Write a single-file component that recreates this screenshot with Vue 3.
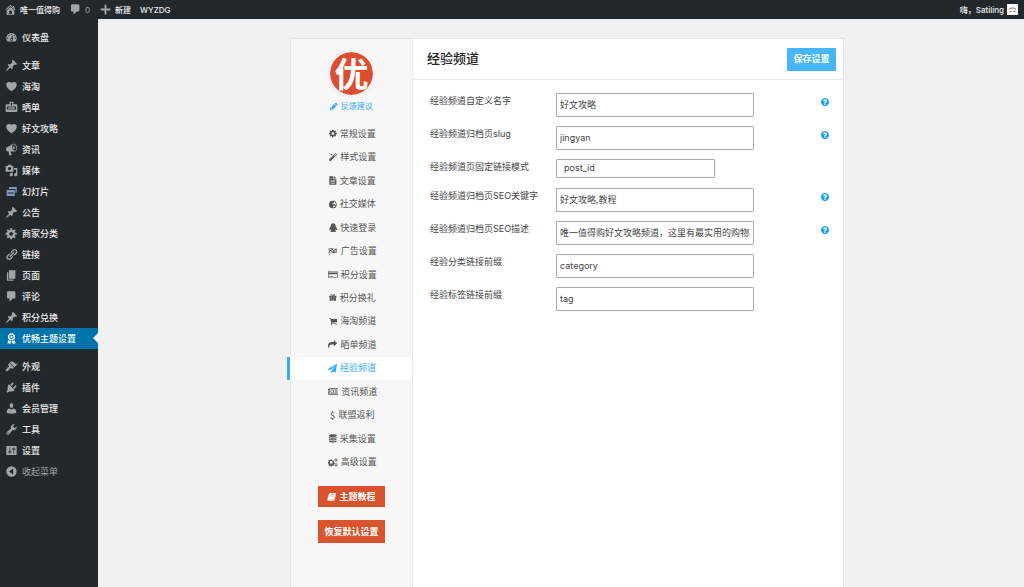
<script setup>
import { ref } from 'vue'

const dash = {
  home: 'M16 8.5l1.53 1.53-1.06 1.06L10 4.6l-6.47 6.49-1.06-1.06L10 2.5l4 4v-2h2v4zm-6-2.46l6 5.99V18H4v-5.97zM12 17v-5H8v5h4z',
  comment: 'M5 2h9c1.1 0 2 .9 2 2v7c0 1.1-.9 2-2 2h-2l-5 5v-5H5c-1.1 0-2-.9-2-2V4c0-1.1.9-2 2-2z',
  plus: 'M17.5 8.6v2.8h-6.1v6.1H8.6v-6.1H2.5V8.6h6.1V2.5h2.8v6.1h6.1z',
  dashboard: 'M3.76 16h12.48c1.1-1.37 1.76-3.11 1.76-5 0-4.42-3.58-8-8-8s-8 3.58-8 8c0 1.89.66 3.63 1.76 5zM10 4c.55 0 1 .45 1 1s-.45 1-1 1-1-.45-1-1 .45-1 1-1zM6 6c.55 0 1 .45 1 1s-.45 1-1 1-1-.45-1-1 .45-1 1-1zm8 0c.55 0 1 .45 1 1s-.45 1-1 1-1-.45-1-1 .45-1 1-1zm-5.37 5.55L12 7v6c0 1.1-.9 2-2 2s-2-.9-2-2c0-.57.24-1.08.63-1.45zM4 10c.55 0 1 .45 1 1s-.45 1-1 1-1-.45-1-1 .45-1 1-1zm12 0c.55 0 1 .45 1 1s-.45 1-1 1-1-.45-1-1 .45-1 1-1zm-5 3c0-.55-.45-1-1-1s-1 .45-1 1 .45 1 1 1 1-.45 1-1z',
  pin: 'M10.44 3.02l1.82-1.82 6.36 6.35-1.83 1.82c-1.05-.68-2.48-.57-3.41.36l-.75.75c-.92.93-1.04 2.35-.35 3.41l-1.83 1.82-2.41-2.41-2.8 2.79c-.42.42-3.38 2.71-3.8 2.29s1.86-3.39 2.28-3.81l2.79-2.79L4.1 9.36l1.83-1.82c1.05.69 2.48.57 3.4-.36l.75-.75c.93-.92 1.05-2.35.36-3.41z',
  heart: 'M10 17.12c3.33-1.4 5.74-3.79 7.04-6.21 1.28-2.41 1.46-4.81.32-6.25-1.03-1.29-2.37-1.78-3.73-1.74s-2.68.63-3.63 1.46c-.95-.83-2.27-1.42-3.63-1.46s-2.7.45-3.73 1.74c-1.14 1.44-.96 3.84.34 6.25 1.28 2.42 3.69 4.81 7.02 6.21z',
  badge: 'M7 1h6v4h4.5Q19 5 19 6.5v9q0 1.5-1.5 1.5h-15Q1 17 1 15.5v-9Q1 5 2.500 5H7zM9 2.500v4h2v-4zM3 8.500v4.500h14V8.500zM5 9.500h10v2.500H5z',
  megaphone: 'M18.15 5.94c.46 1.62.38 3.22-.02 4.48-.42 1.28-1.26 2.18-2.3 2.48-.16.06-.26.06-.4.06-.06.02-.12.02-.18.02-.06.02-.14.02-.22.02h-6.8l2.22 5.5c.02.14-.06.26-.14.34-.08.1-.24.16-.34.16H6.95c-.1 0-.26-.06-.34-.16-.08-.08-.16-.2-.14-.34l-1-5.5H4.25l-.02-.02c-.5.06-1.08-.18-1.54-.62s-.88-1.08-1.06-1.88c-.24-.8-.2-1.56-.02-2.2.18-.62.58-1.08 1.06-1.3l.02-.02 9-5.4c.1-.06.18-.1.24-.16.06-.04.14-.08.24-.12.16-.08.28-.12.5-.18 1.04-.3 2.24.1 3.22.98s1.84 2.24 2.26 3.86zm-2.58 5.98h-.02c.4-.1.74-.34 1.04-.7.58-.7.86-1.76.86-3.04 0-.64-.1-1.3-.28-1.98-.34-1.36-1.02-2.5-1.78-3.24s-1.68-1.1-2.46-.88c-.82.22-1.4.96-1.7 2-.32 1.04-.28 2.36.06 3.72.38 1.36 1 2.5 1.8 3.24.78.74 1.62 1.1 2.48.88zm-2.54-7.08c.22-.04.42-.02.62.04.38.16.76.48 1.02 1s.42 1.2.42 1.78c0 .3-.04.56-.12.8-.18.48-.44.84-.86.94-.34.1-.8-.06-1.14-.4s-.64-.86-.78-1.5c-.18-.62-.12-1.24.02-1.72s.48-.84.82-.94z',
  media: 'M13 11V4c0-.55-.45-1-1-1h-1.67L9 1H5L3.67 3H2c-.55 0-1 .45-1 1v7c0 .55.45 1 1 1h10c.55 0 1-.45 1-1zM7 4.5c1.38 0 2.5 1.12 2.5 2.5S8.38 9.5 7 9.5 4.5 8.38 4.5 7 5.62 4.5 7 4.5zM14 6h5v10.5c0 1.38-1.12 2.5-2.5 2.5S14 17.88 14 16.5s1.12-2.5 2.5-2.5c.17 0 .34.02.5.05V9h-3V6zm-4 8.05V13h2v3.5c0 1.38-1.12 2.5-2.5 2.5S7 17.88 7 16.5 8.12 14 9.5 14c.17 0 .34.02.5.05z',
  slides: 'M6 3h12v9h-2V6H6zM2.5 7.5H15V17H2.5zM4.5 11.5V13H13v-1.5z',
  gear: 'M18 12h-2.18c-.17.7-.44 1.35-.81 1.93l1.54 1.54-2.1 2.1-1.54-1.54c-.58.36-1.23.63-1.91.79V19H8v-2.18c-.68-.16-1.33-.43-1.91-.79l-1.54 1.54-2.12-2.12 1.54-1.54c-.36-.58-.63-1.23-.79-1.91H1V9.03h2.17c.16-.7.44-1.35.8-1.94L2.43 5.55l2.1-2.1 1.54 1.54c.58-.37 1.24-.64 1.93-.81V2h3v2.18c.68.16 1.33.43 1.91.79l1.54-1.54 2.12 2.12-1.54 1.54c.36.59.64 1.24.8 1.94H18V12zm-8.5 1.5c1.66 0 3-1.34 3-3s-1.34-3-3-3-3 1.34-3 3 1.34 3 3 3z',
  link: 'M17.74 2.76c1.68 1.69 1.68 4.41 0 6.1l-1.53 1.52c-1.12 1.12-2.7 1.47-4.14 1.09l2.62-2.61.76-.77.76-.76c.84-.84.84-2.2 0-3.04-.84-.85-2.2-.85-3.04 0l-.77.76-3.38 3.38c-.37-1.44-.02-3.02 1.1-4.14l1.52-1.53c1.69-1.68 4.42-1.68 6.1 0zM8.59 13.43l5.34-5.34c.42-.42.42-1.1 0-1.52-.44-.43-1.13-.39-1.53 0l-5.33 5.34c-.42.42-.42 1.1 0 1.52.44.43 1.13.39 1.52 0zm-.76 2.29l4.14-4.15c.38 1.44.03 3.02-1.09 4.14l-1.52 1.53c-1.69 1.68-4.41 1.68-6.1 0-1.68-1.68-1.68-4.42 0-6.1l1.53-1.52c1.12-1.12 2.7-1.47 4.14-1.1l-4.14 4.15c-.85.84-.85 2.2 0 3.05.84.84 2.2.84 3.04 0z',
  page: 'M6 15V2h10v13H6zm-1 1h8v2H3V5h2v11z',
  award: 'M4.46 5.16L5 7.46l-.54 2.29 2.01 1.24L7.7 13l2.3-.54 2.3.54 1.23-2.01 2.01-1.24L15 7.46l.54-2.3-2-1.24-1.24-2.01-2.3.55-2.29-.54-1.25 2zM10 4.3a3.2 3.2 0 1 0 0 6.4 3.2 3.2 0 1 0 0-6.4zM10 5.8a1.7 1.7 0 1 1 0 3.4 1.7 1.7 0 1 1 0-3.4zM5.600 11.900L3.500 17.500l2.800-.3L8 19l1.800-5.300-2.500.5zM14.400 11.900l2.100 5.600-2.800-.3L12 19l-1.800-5.300 2.500.5z',
  brush: 'M14.48 11.06L7.41 3.99l1.5-1.5c.5-.56 2.3-.47 3.51.32 1.21.8 1.43 1.28 2.91 2.1 1.18.64 2.45 1.26 4.45.85zm-.71.71L6.7 4.7 4.93 6.47c-.39.39-.39 1.02 0 1.41l1.06 1.06c.39.39.39 1.03 0 1.42-.6.6-1.43 1.11-2.21 1.69-.35.26-.7.53-1.01.84C1.43 14.23.4 16.08 1.4 17.07c.99 1 2.84-.03 4.18-1.36.31-.31.58-.66.85-1.02.57-.78 1.08-1.61 1.69-2.21.39-.39 1.02-.39 1.41 0l1.06 1.06c.39.39 1.02.39 1.41 0z',
  plug: 'M13.11 4.36L9.87 7.6 8 5.73l3.24-3.24c.35-.34 1.05-.2 1.56.32.52.51.66 1.21.31 1.55zm-8 1.77l.91-1.12 9.01 9.01-1.19.84c-.71.71-2.63 1.16-3.82 1.16H6.14L4.9 17.26c-.59.59-1.54.59-2.12 0-.59-.58-.59-1.53 0-2.12l1.24-1.24v-3.88c0-1.13.4-3.19 1.09-3.89zm7.26 3.97l3.24-3.24c.34-.35 1.04-.21 1.55.31.52.51.66 1.21.31 1.55l-3.24 3.25z',
  user: 'M10 9.25c-2.27 0-2.73-3.44-2.73-3.44C7 4.02 7.82 2 9.97 2c2.16 0 2.98 2.02 2.71 3.81 0 0-.41 3.44-2.68 3.44zm0 2.57L12.72 10c2.39 0 4.52 2.33 4.52 4.53v2.49s-3.65 1.13-7.24 1.13c-3.65 0-7.24-1.13-7.24-1.13v-2.49c0-2.25 1.94-4.48 4.47-4.48z',
  wrench: 'M16.68 9.77c-1.34 1.34-3.3 1.67-4.95.99l-5.41 6.52c-.99.99-2.59.99-3.58 0s-.99-2.59 0-3.57l6.52-5.42c-.68-1.65-.35-3.61.99-4.95 1.28-1.28 3.12-1.62 4.72-1.06l-2.89 2.89 2.82 2.82 2.86-2.87c.53 1.58.18 3.39-1.08 4.65zM3.81 16.21c.4.39 1.04.39 1.43 0 .4-.4.4-1.04 0-1.43-.39-.4-1.03-.4-1.43 0-.39.39-.39 1.03 0 1.43z',
  sliders: 'M18 16V4c0-.55-.45-1-1-1H3c-.55 0-1 .45-1 1v12c0 .55.45 1 1 1h13c.55 0 2-.45 2-1zM8 11h1c.55 0 1 .45 1 1s-.45 1-1 1H8v1.5c0 .28-.22.5-.5.5s-.5-.22-.5-.5V13H6c-.55 0-1-.45-1-1s.45-1 1-1h1V5.5c0-.28.22-.5.5-.5s.5.22.5.5V11zm5-2h-1c-.55 0-1-.45-1-1s.45-1 1-1h1V5.5c0-.28.22-.5.5-.5s.5.22.5.5V7h1c.55 0 1 .45 1 1s-.45 1-1 1h-1v5.5c0 .28-.22.5-.5.5s-.5-.22-.5-.5V9z',
  collapse: 'M10 2a8 8 0 1 1 0 16 8 8 0 1 1 0-16zM12.5 5.5L6.5 10l6 4.5z'
}

const menu = [
  [{ t: '仪表盘', i: 'dashboard' }],
  [
    { t: '文章', i: 'pin' },
    { t: '海淘', i: 'heart' },
    { t: '晒单', i: 'badge' },
    { t: '好文攻略', i: 'heart' },
    { t: '资讯', i: 'megaphone' },
    { t: '媒体', i: 'media' },
    { t: '幻灯片', i: 'slides', blue: true },
    { t: '公告', i: 'pin' },
    { t: '商家分类', i: 'gear' },
    { t: '链接', i: 'link' },
    { t: '页面', i: 'page' },
    { t: '评论', i: 'comment' },
    { t: '积分兑换', i: 'pin' },
    { t: '优畅主题设置', i: 'award', current: true }
  ],
  [
    { t: '外观', i: 'brush' },
    { t: '插件', i: 'plug' },
    { t: '会员管理', i: 'user' },
    { t: '工具', i: 'wrench' },
    { t: '设置', i: 'sliders' }
  ]
]

const pencil = 'M491 1536l91-91-235-235-91 91v107h128v128h107zM960 416l416 416-832 832h-416v-416zm683 96q0 53-37 90l-166 166-416-416 166-165q36-38 90-38 53 0 91 38l235 234q37 39 37 91z'
const help = 'M1024 1376v-192q0-14-9-23t-23-9h-192q-14 0-23 9t-9 23v192q0 14 9 23t23 9h192q14 0 23-9t9-23zm256-672q0-88-55.5-163t-138.5-116-170-41q-243 0-371 213-15 24 8 42l132 100q7 6 19 6 16 0 25-12 53-68 86-92 34-24 86-24 48 0 85.5 26t37.5 59q0 38-20 61t-68 45q-63 28-115.5 86.5t-52.5 125.5v36q0 14 9 23t23 9h192q14 0 23-9t9-23q0-19 21.5-49.5t54.5-49.5q32-18 49-28.5t46-35 44.5-48 28-60.5 12.5-81zm384 192q0 209-103 385.5t-279.5 279.5-385.5 103-385.5-103-279.5-279.5-103-385.5 103-385.5 279.5-279.5 385.5-103 385.5 103 279.5 279.5 103 385.5z'
const book = 'M620 190h1060q90 20 60 120l-300 1130q-30 90-120 90H340q-100 0-90 70t120 60h1030l40-90 270-1020q70 60 40 160l-270 1000q-30 90-120 90H330Q90 1780 60 1540q-10-60 20-130L420 350q50-150 200-160zM730 480l-30 110h680l30-110zM660 750l-30 110h680l30-110z'

const tabs = [
  { t: '常规设置', box: '128 0 1536 1792', d: 'M1152 896q0-106-75-181t-181-75-181 75-75 181 75 181 181 75 181-75 75-181zm512-109v222q0 12-8 23t-20 13l-185 28q-19 54-39 91 35 50 107 138 10 12 10 25t-9 23q-27 37-99 108t-94 71q-12 0-26-9l-138-108q-44 23-91 38-16 136-29 186-7 28-36 28h-222q-14 0-24.5-8.5t-11.5-21.5l-28-184q-49-16-90-37l-141 107q-10 9-25 9-14 0-25-11-126-114-165-168-7-10-7-23 0-12 8-23 15-21 51-66.5t54-70.5q-27-50-41-99l-183-27q-13-2-21-12.5t-8-23.5v-222q0-12 8-23t19-13l186-28q14-46 39-92-40-57-107-138-10-12-10-24 0-10 9-23 26-36 98.5-107.5t94.5-71.5q13 0 26 10l138 107q44-23 91-38 16-136 29-186 7-28 36-28h222q14 0 24.5 8.5t11.5 21.5l28 184q49 16 90 37l142-107q9-9 24-9 13 0 25 10 129 119 165 170 7 8 7 22 0 12-8 23-15 21-51 66.5t-54 70.5q26 50 41 98l183 28q13 2 21 12.5t8 23.5z' },
  { t: '样式设置', box: '64 0 1664 1792', d: 'M1190 581l293-293-107-107-293 293zM1637 288q0 27-18 45L333 1619q-18 18-45 18t-45-18L45 1421q-18-18-18-45t18-45L1331 45q18-18 45-18t45 18l198 198q18 18 18 45zM286 98l98 30-98 30-30 98-30-98-98-30 98-30 30-98zM636 260l196 60-196 60-60 196-60-196-196-60 196-60 60-196zM1566 738l98 30-98 30-30 98-30-98-98-30 98-30 30-98z' },
  { t: '文章设置', box: '128 0 1536 1792', d: 'M192 64h832v576h576v1088H192zM1152 64l448 448h-448zM448 832v128h896V832zM448 1088v128h896v-128zM448 1344v128h896v-128zM448 384v128h320V384z' },
  { t: '社交媒体', box: '128 0 1536 1792', d: 'M896 128a768 768 0 1 1 0 1536 768 768 0 1 1 0-1536zM1000 260L1180 400l-160 240-260 60 120 180 300-60 200 120 180-60Q1480 400 1000 260zM1130 1080l-200 170 60 260q330-50 450-330z' },
  { t: '快速登录', box: '64 0 1664 1792', d: 'M896 64q480 0 500 640 160 190 230 400 70 230 0 310-70 50-200-160-40 150-130 230 200 70 180 180-60 130-350 110-160 0-230-50-70 50-230 50-290 20-350-110-20-110 180-180-90-80-130-230-130 210-200 160-70-80 0-310 70-210 230-400Q416 64 896 64z' },
  { t: '广告设置', box: '0 0 1892 1792', d: 'M150 192h130v1472H150zM340 280q300-150 650 20 340 160 760-20v840q-420 190-800 10-300-140-610 30zM430 390v230l280-50v-230zM710 570v250l290 80V660zM1000 400v260l300 40V440zM1300 700v270l340-60V640zM430 850v180l280-60V820z' },
  { t: '积分设置', box: '0 0 1920 1792', d: 'M160 192h1600q160 0 160 160v1088q0 160-160 160H160Q0 1600 0 1440V352q0-160 160-160zM128 320v192h1664V320zM128 832v640h1664V832zM256 1216h256v128H256zM640 1216h384v128H640z' },
  { t: '积分换礼', box: '128 0 1536 1792', d: 'M730 510h332v960H730zM170 560h520v320H170zM1100 560h520v320h-520zM256 940h430v580H320q-64 0-64-64zM1106 940h430v516q0 64-64 64h-366zM560 200q150-30 336 290 186-320 336-290 150 30 120 190-40 120-220 130H660q-180-10-220-130-30-160 120-190zM590 320q-60 90 40 110h130q-90-130-170-110zM1202 320q60 90-40 110h-130q90-130 170-110z' },
  { t: '海淘频道', box: '64 0 1664 1792', d: 'M704 1536q0 52-38 90t-90 38-90-38-38-90 38-90 90-38 90 38 38 90zm896 0q0 52-38 90t-90 38-90-38-38-90 38-90 90-38 90 38 38 90zm128-1088v512q0 24-16.5 42.5t-40.5 21.5l-1044 122q13 60 13 70 0 16-24 64h920q26 0 45 19t19 45-19 45-45 19h-1024q-26 0-45-19t-19-45q0-11 8-31.5t16-36 21.5-40 15.5-29.5l-177-823h-204q-26 0-45-19t-19-45 19-45 45-19h256q16 0 28.5 6.5t19.5 15.5 13 24.5 8 26 5.5 29.5 4.5 26h1201q26 0 45 19t19 45z' },
  { t: '晒单频道', box: '0 0 1792 1792', d: 'M1792 640q0 26-19 45l-512 512q-19 19-45 19t-45-19-19-45v-256h-224q-98 0-175.5 6t-154 21.5-133 42.5-105.5 69.5-80 101-48.5 138.5-17.5 181q0 55 5 123 0 6 2.5 23.5t2.5 26.5q0 15-8.5 25t-23.5 10q-16 0-28-17-7-9-13-22t-13.5-30-10.5-24q-127-285-127-451 0-199 53-333 162-403 875-403h224v-256q0-26 19-45t45-19 45 19l512 512q19 19 19 45z' },
  { t: '经验频道', box: '0 0 1792 1792', current: true, d: 'M1764 11q33 24 27 64l-256 1536q-5 29-32 45-14 8-31 8-11 0-24-5l-453-185-242 295q-18 23-49 23-13 0-22-4-19-7-30.5-23.5t-11.5-36.5v-349l864-1059-1069 925-395-162q-37-14-40-55-2-40 32-59l1664-960q15-9 32-9 20 0 36 11z' },
  { t: '资讯频道', box: '0 0 2048 1792', d: 'M256 256h1792v1152q0 128-128 128H128Q0 1536 0 1408V384h256zM384 384v1024h1500q36 0 36-36V384zM128 512v860q0 60 64 60t64-60V512zM512 512h640v640H512zM640 640v384h384V640zM1280 512h512v128h-512zM1280 768h512v128h-512zM1280 1024h512v128h-512zM512 1240h1280v100H512z' },
  { t: '联盟返利', box: '384 0 1024 1792', d: 'M820 0h150v230q190 20 320 130l-90 150q-150-110-310-110-220 0-220 160 0 110 250 190 410 130 410 440 0 300-360 370v232H820v-230q-240-30-390-190l110-150q160 160 360 160 240 0 240-180 0-120-250-200-400-120-400-430 0-290 330-340z' },
  { t: '采集设置', box: '128 0 1536 1792', d: 'M128 256q0-192 768-192t768 192v130q-60 200-768 200T128 386zM128 580q200 140 768 140t768-140v150q-60 200-768 200T128 730zM128 930q200 140 768 140t768-140v150q-60 200-768 200t-768-200zM128 1280q200 140 768 140t768-140v230q-60 200-768 200t-768-200z' },
  { t: '高级设置', box: '0 0 1920 1792', d: 'M520 320h240l30 170 110 50 140-100 170 170-100 140 50 110 170 30v240l-170 30-50 110 100 140-170 170-140-100-110 50-30 170H520l-30-170-110-50-140 100-170-170 100-140-50-110-120-30V774l120-30 50-110L70 494l170-170 140 100 110-50zM640 620a256 256 0 1 0 0 512 256 256 0 1 0 0-512zM1590 110a300 300 0 1 1 0 600 300 300 0 1 1 0-600zM1590 270a140 140 0 1 0 0 280 140 140 0 1 0 0-280zM1590 1030a300 300 0 1 1 0 600 300 300 0 1 1 0-600zM1590 1190a140 140 0 1 0 0 280 140 140 0 1 0 0-280z' }
]

const fields = ref([
  { id: 'name', label: '经验频道自定义名字', value: '好文攻略', help: true },
  { id: 'slug', label: '经验频道归档页slug', value: 'jingyan', help: true },
  { id: 'permalink', label: '经验频道页固定链接模式', value: 'post_id', select: true },
  { id: 'keywords', label: '经验频道归档页SEO关键字', value: '好文攻略,教程', help: true },
  { id: 'description', label: '经验频道归档页SEO描述', value: '唯一值得购好文攻略频道，这里有最实用的购物攻略', help: true },
  { id: 'category', label: '经验分类链接前缀', value: 'category' },
  { id: 'tag', label: '经验标签链接前缀', value: 'tag' }
])
</script>

<template>
  <div class="page">
    <header class="bar">
      <a class="bar-item" href="#"><svg class="dash" viewBox="0 0 20 20"><path :d="dash.home" /></svg>唯一值得购</a>
      <a class="bar-item" href="#"><svg class="dash" viewBox="0 0 20 20"><path :d="dash.comment" /></svg><span class="count">0</span></a>
      <a class="bar-item" href="#"><svg class="dash" viewBox="0 0 20 20"><path :d="dash.plus" /></svg>新建</a>
      <a class="bar-item" href="#">WYZDG</a>
      <a class="bar-item account" href="#">嗨，Satiling
        <svg class="avatar" viewBox="0 0 11 11"><rect width="11" height="11" fill="#fff" /><path d="M2 5.500L4 4H7L9 5.500M2.500 7.500H4.500M6.500 7.500H8.500" fill="none" stroke="#777" /></svg>
      </a>
    </header>

    <div class="body">
      <nav class="menu" aria-label="主菜单">
        <ul v-for="(group, g) in menu" :key="g" class="group">
          <li v-for="item in group" :key="item.t">
            <a class="entry" :class="{ current: item.current, blue: item.blue }" href="#">
              <svg class="dash" viewBox="0 0 20 20"><path :d="dash[item.i]" /></svg>{{ item.t }}
            </a>
          </li>
        </ul>
        <button class="entry collapse" type="button">
          <svg class="dash" viewBox="0 0 20 20"><path :d="dash.collapse" /></svg>收起菜单
        </button>
      </nav>

      <main class="content">
        <div class="panel">
          <aside class="side">
            <div class="logo">优</div>
            <a class="feedback" href="#"><svg class="fa" viewBox="128 0 1536 1792"><path :d="pencil" /></svg>反馈建议</a>
            <nav class="tabs" aria-label="主题设置">
              <a v-for="tab in tabs" :key="tab.t" class="tab" :class="{ active: tab.current }" href="#">
                <svg class="fa" :viewBox="tab.box"><path :d="tab.d" /></svg>{{ tab.t }}
              </a>
            </nav>
            <a class="red guide" href="#"><svg class="fa" viewBox="0 0 1792 1792"><path :d="book" /></svg>主题教程</a>
            <button class="red reset" type="button">恢复默认设置</button>
          </aside>

          <form class="main" @submit.prevent>
            <div class="head">
              <h1>经验频道</h1>
              <button class="save" type="submit">保存设置</button>
            </div>
            <div class="rows">
              <div v-for="f in fields" :key="f.id" class="row" :class="{ short: f.select }">
                <label :for="f.id">{{ f.label }}</label>
                <select v-if="f.select" :id="f.id" v-model="f.value" class="field narrow">
                  <option>post_id</option>
                </select>
                <input v-else :id="f.id" v-model="f.value" class="field" type="text">
                <button v-if="f.help" class="help" type="button" :aria-label="f.label + '帮助'">
                  <svg viewBox="128 128 1536 1536"><path :d="help" /></svg>
                </button>
              </div>
            </div>
          </form>
        </div>
      </main>
    </div>
  </div>
</template>

<style>
body {
  margin: 0;
  background: #f1f1f1;
}
</style>

<style scoped>
.page {
  display: flex;
  flex-direction: column;
  min-height: 100vh;
  font: 9px/16px Inter, "Noto Sans CJK SC", sans-serif;
  color: #444;
}
a {
  text-decoration: none;
  color: inherit;
}
button,
input,
select {
  font: inherit;
  color: inherit;
  box-sizing: border-box;
  margin: 0;
}
button {
  border: 0;
  padding: 0;
  background: none;
  cursor: pointer;
}
svg {
  display: block;
  flex: none;
  fill: currentColor;
  fill-rule: evenodd;
}
.dash {
  width: 13px;
  height: 13px;
  color: #a0a5aa;
}
.fa {
  height: 9px;
}

.bar {
  display: flex;
  align-items: center;
  height: 19px;
  padding: 0 6px 0 4px;
  gap: 9px;
  background: #23282d;
  color: #eee;
  font-size: 8px;
  font-weight: 500;
}
.bar-item {
  display: flex;
  align-items: center;
  gap: 3px;
}
.count {
  color: #a0a5aa;
  font-weight: 400;
}
.account {
  margin-left: auto;
}
.avatar {
  width: 11px;
  height: 11px;
}

.body {
  display: flex;
  flex: 1;
}
.menu {
  flex: none;
  width: 98px;
  padding-top: 8px;
  background: #23282d;
  color: #eee;
  font-weight: 500;
}
.group {
  list-style: none;
  margin: 0 0 7px;
  padding: 0;
}
.group:last-of-type {
  margin-bottom: 0;
}
.entry {
  position: relative;
  display: flex;
  align-items: center;
  gap: 4px;
  height: 21px;
  padding-left: 5px;
}
.blue .dash {
  color: #8398bd;
}
.current {
  background: #0073aa;
  color: #fff;
}
.current .dash {
  color: #fff;
}
.current::after {
  content: "";
  position: absolute;
  right: 0;
  top: 5px;
  border: 5px solid transparent;
  border-left: 0;
  border-right-color: #f1f1f1;
}
.collapse {
  color: #a0a5aa;
  font-weight: 400;
}

.content {
  display: flex;
  justify-content: center;
  flex: 1;
  padding: 19px 0 0 12px;
}
.panel {
  display: flex;
  box-sizing: border-box;
  width: 100%;
  max-width: 554px;
  border: 1px solid #e5e5e5;
  border-bottom: 0;
  background: #fff;
}
.side {
  display: flex;
  flex-direction: column;
  align-items: center;
  flex: none;
  width: 121px;
  padding-top: 10px;
  border-right: 1px solid #ececec;
  background: #f7f7f7;
}
.logo {
  width: 43px;
  height: 43px;
  border: 3px solid #f2f2f2;
  border-radius: 50%;
  background: #dc4e2f;
  background-clip: padding-box;
  color: #fff;
  font: 700 34px/42px "Noto Sans CJK SC", sans-serif;
  text-align: center;
}
.feedback {
  display: flex;
  align-items: center;
  gap: 3px;
  height: 16px;
  margin-bottom: 8px;
  color: #36aef5;
  font-size: 8px;
}
.tabs {
  display: grid;
  grid-auto-rows: 1fr;
  align-self: stretch;
  height: 352px;
}
.tab {
  display: flex;
  align-items: center;
  justify-content: center;
  gap: 3px;
  padding-left: 2px;
  color: #555;
}
.active {
  margin-left: -4px;
  border-left: 3px solid #36aef5;
  background: #fff;
  color: #36aef5;
}
.red {
  display: flex;
  align-items: center;
  justify-content: center;
  width: 67px;
  height: 23px;
  gap: 3px;
  background: #d9532c;
  color: #fff;
  font-weight: 700;
}
.guide {
  height: 21px;
  margin: 12px 0 13px;
}

.main {
  flex: 1;
  min-width: 0;
}
.head {
  display: flex;
  align-items: center;
  justify-content: space-between;
  height: 40px;
  padding: 0 7px 0 14px;
  border-bottom: 1px solid #e8e8e8;
}
h1 {
  margin: 0;
  padding-bottom: 3px;
  font-size: 13px;
  font-weight: 500;
  color: #222;
}
.save {
  width: 49px;
  height: 23px;
  border-radius: 1px;
  background: #45b6f7;
  color: #fff;
  font-weight: 700;
}
.rows {
  display: flex;
  flex-direction: column;
  gap: 9px;
  padding: 13px 14px 20px 17px;
}
.row {
  display: flex;
  align-items: flex-start;
  height: 24px;
}
.short {
  height: 20px;
}
label {
  flex: none;
  width: 126px;
}
.field {
  width: 198px;
  height: 24px;
  padding: 0 3px 2px;
  border: 1px solid #a5aaaf;
  border-radius: 1px;
  outline: 0;
  background: #fff;
}
.narrow {
  width: 159px;
  height: 19px;
  padding-left: 7px;
  appearance: none;
}
.help {
  width: 8px;
  height: 8px;
  margin: 5px 0 0 auto;
  color: #1ba0ea;
}
</style>
